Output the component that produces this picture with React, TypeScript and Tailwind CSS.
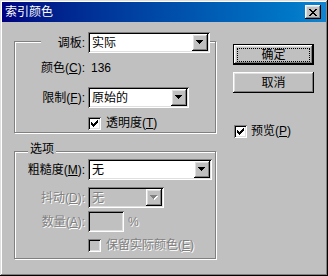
const font = "font-['Liberation_Sans','Noto_Sans_CJK_SC',sans-serif]";
const raised = "shadow-[inset_-1px_-1px_#000,inset_1px_1px_#fff,inset_-2px_-2px_#808080,inset_2px_2px_#dfdfdf]";
const sunken = "shadow-[inset_1px_1px_#808080,inset_-1px_-1px_#fff,inset_2px_2px_#000,inset_-2px_-2px_#dfdfdf]";
const frame = "shadow-[inset_-1px_-1px_#000,inset_1px_1px_#dfdfdf,inset_-2px_-2px_#808080,inset_2px_2px_#fff]";
const groupBox = "border border-[#808080] shadow-[1px_1px_0_#fff,inset_1px_1px_0_#fff]";
const dim = "text-[#808080] [text-shadow:1px_1px_0_#fff]";

function Mn({ k }: { k: string }) {
    return (
        <>
            (<span className="underline underline-offset-1">{k}</span>)
        </>
    );
}

function Arrow({ disabled }: { disabled?: boolean }) {
    const c = disabled ? "#808080" : "#000";
    return (
        <svg width="8" height="5" viewBox="0 0 8 5" shapeRendering="crispEdges">
            {disabled && (
                <g fill="#fff">
                    <rect x="1" y="1" width="7" height="1" />
                    <rect x="2" y="2" width="5" height="1" />
                    <rect x="3" y="3" width="3" height="1" />
                    <rect x="4" y="4" width="1" height="1" />
                </g>
            )}
            <g fill={c}>
                <rect x="0" y="0" width="7" height="1" />
                <rect x="1" y="1" width="5" height="1" />
                <rect x="2" y="2" width="3" height="1" />
                <rect x="3" y="3" width="1" height="1" />
            </g>
        </svg>
    );
}

function Combo({ value, width, disabled }: { value: string; width: string; disabled?: boolean }) {
    return (
        <div className={`flex h-[21px] items-center p-[2px] ${width} ${sunken} ${disabled ? "bg-[#c0c0c0]" : "bg-white"}`}>
            <span className={`flex-1 pl-[2px] ${disabled ? dim : ""}`}>{value}</span>
            <div className={`flex h-[17px] w-[16px] items-center justify-center bg-[#c0c0c0] ${raised}`}>
                <Arrow disabled={disabled} />
            </div>
        </div>
    );
}

function Check({ checked, disabled }: { checked?: boolean; disabled?: boolean }) {
    const cols = [2, 3, 4, 3, 2, 1, 0];
    return (
        <div className={`flex h-[13px] w-[13px] shrink-0 items-center justify-center ${sunken} ${disabled ? "bg-[#c0c0c0]" : "bg-white"}`}>
            {checked && (
                <svg width="7" height="7" viewBox="0 0 7 7" shapeRendering="crispEdges">
                    {cols.map((y, x) => (
                        <rect key={x} x={x} y={y} width="1" height="3" fill="#000" />
                    ))}
                </svg>
            )}
        </div>
    );
}

function CloseButton() {
    const rows = [
        [0, 2, 6, 2],
        [1, 2, 5, 2],
        [2, 4],
        [3, 2],
        [2, 4],
        [1, 2, 5, 2],
        [0, 2, 6, 2],
    ];
    return (
        <div className={`flex h-[14px] w-[16px] items-center justify-center bg-[#c0c0c0] ${raised}`}>
            <svg width="8" height="7" viewBox="0 0 8 7" shapeRendering="crispEdges">
                {rows.map((r, y) => (
                    <g key={y} fill="#000">
                        <rect x={r[0]} y={y} width={r[1]} height="1" />
                        {r.length > 2 && <rect x={r[2]} y={y} width={r[3]} height="1" />}
                    </g>
                ))}
            </svg>
        </div>
    );
}

function Button({ text, primary }: { text: string; primary?: boolean }) {
    return (
        <div className={`relative flex h-[21px] w-[81px] items-center justify-center bg-[#c0c0c0] ${primary ? "border border-black" : ""} ${raised}`}>
            {primary && <div className="absolute inset-x-[3px] top-[3px] bottom-[2px] border border-dotted border-black" />}
            <span>{text}</span>
        </div>
    );
}

export default function App() {
    return (
        <div className={`flex h-[276px] w-[328px] flex-col bg-[#c0c0c0] p-[2px] text-[12px] leading-[14px] text-black ${font} ${frame}`}>
            <div className="flex h-[20px] items-center justify-between bg-linear-to-r from-[#000080] to-[#1084d0] pl-[3px] pr-[5px]">
                <span className="text-white">索引颜色</span>
                <CloseButton />
            </div>
            <div className="flex">
                <div className="ml-[12px] flex flex-col">
                    <div className={`mt-[19px] flex h-[92px] w-[202px] flex-col ${groupBox}`}>
                        <div className="-mt-[10px] flex h-[21px] items-center">
                            <span className="ml-[26px] w-[47px] bg-[#c0c0c0] pr-[3px] text-right">调板:</span>
                            <Combo value="实际" width="w-[122px]" />
                        </div>
                        <div className="mt-[4px] flex h-[21px] items-center">
                            <span className="w-[70px] text-right">
                                颜色<Mn k="C" />:
                            </span>
                            <span className="ml-[6px]">136</span>
                        </div>
                        <div className="mt-[9px] flex h-[21px] items-center">
                            <span className="w-[70px] text-right">
                                限制<Mn k="F" />:
                            </span>
                            <div className="ml-[3px]">
                                <Combo value="原始的" width="w-[101px]" />
                            </div>
                        </div>
                        <div className="mt-[8px] ml-[73px] flex items-center gap-[5px]">
                            <Check checked />
                            <span>
                                透明度<Mn k="T" />
                            </span>
                        </div>
                    </div>
                    <div className={`relative mt-[18px] flex h-[108px] w-[202px] flex-col ${groupBox}`}>
                        <span className="absolute -top-[10px] left-[13px] bg-[#c0c0c0] px-[2px]">选项</span>
                        <div className="mt-[7px] flex h-[21px] items-center">
                            <span className="w-[70px] text-right">
                                粗糙度<Mn k="M" />:
                            </span>
                            <div className="ml-[3px]">
                                <Combo value="无" width="w-[124px]" />
                            </div>
                        </div>
                        <div className="mt-[7px] flex h-[21px] items-center">
                            <span className={`w-[70px] text-right ${dim}`}>
                                抖动<Mn k="D" />:
                            </span>
                            <div className="ml-[3px]">
                                <Combo value="无" width="w-[76px]" disabled />
                            </div>
                        </div>
                        <div className="mt-[3px] flex h-[21px] items-center">
                            <span className={`w-[70px] text-right ${dim}`}>
                                数量<Mn k="A" />:
                            </span>
                            <div className={`ml-[3px] h-[21px] w-[36px] bg-[#c0c0c0] ${sunken}`} />
                            <span className={`ml-[4px] ${dim}`}>%</span>
                        </div>
                        <div className="mt-[6px] ml-[73px] flex items-center gap-[5px]">
                            <Check disabled />
                            <span className={dim}>
                                保留实际颜色<Mn k="E" />
                            </span>
                        </div>
                    </div>
                </div>
                <div className="ml-[17px] mt-[22px] flex w-[81px] flex-col">
                    <Button text="确定" primary />
                    <div className="mt-[7px]">
                        <Button text="取消" />
                    </div>
                    <div className="mt-[31px] ml-[1px] flex items-center gap-[4px]">
                        <Check checked />
                        <span>
                            预览<Mn k="P" />
                        </span>
                    </div>
                </div>
            </div>
        </div>
    );
}
